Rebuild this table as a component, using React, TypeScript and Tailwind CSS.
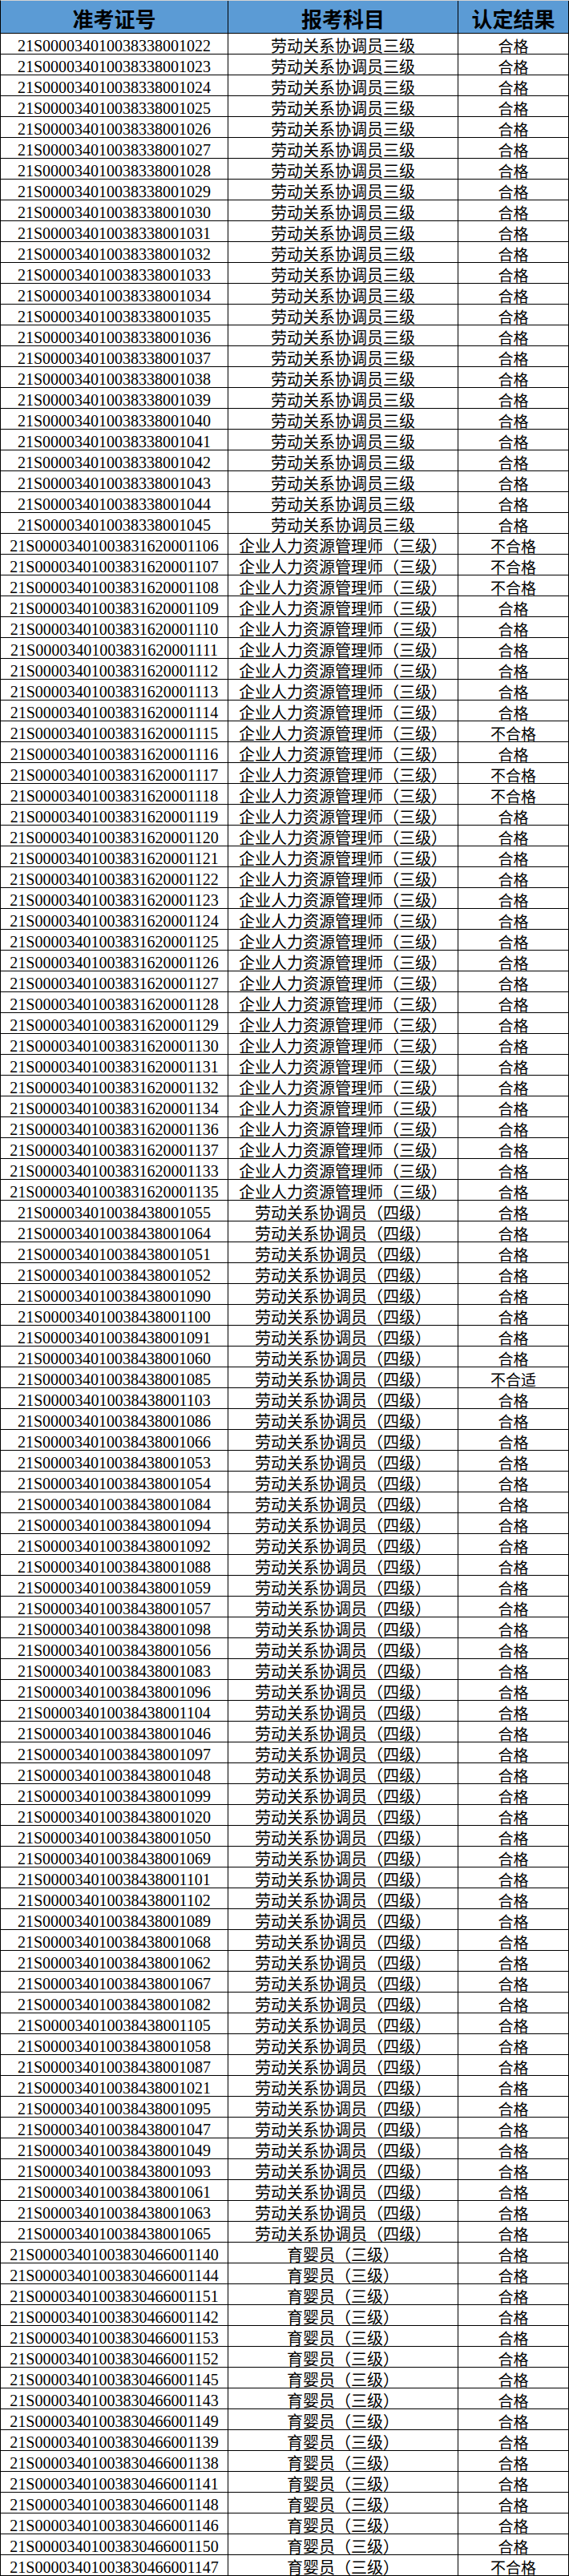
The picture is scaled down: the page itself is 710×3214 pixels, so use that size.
type Row = { id: string; subject: string; result: string };

const LAO3 = "劳动关系协调员三级";
const QIYE = "企业人力资源管理师（三级）";
const LAO4 = "劳动关系协调员（四级）";
const YUYING = "育婴员（三级）";

const build = (prefix: string, subject: string, nums: number[], fails: Record<number, string> = {}): Row[] =>
  nums.map((n) => ({ id: prefix + n, subject, result: fails[n] || "合格" }));

const range = (a: number, b: number) => Array.from({ length: b - a + 1 }, (_, i) => a + i);

const rows: Row[] = [
  ...build("21S00003401003833800", LAO3, range(1022, 1045)),
  ...build(
    "21S0000340100383162000",
    QIYE,
    [...range(1106, 1132), 1134, 1136, 1137, 1133, 1135],
    { 1106: "不合格", 1107: "不合格", 1108: "不合格", 1115: "不合格", 1117: "不合格", 1118: "不合格" }
  ),
  ...build(
    "21S00003401003843800",
    LAO4,
    [
      1055, 1064, 1051, 1052, 1090, 1100, 1091, 1060, 1085, 1103,
      1086, 1066, 1053, 1054, 1084, 1094, 1092, 1088, 1059, 1057,
      1098, 1056, 1083, 1096, 1104, 1046, 1097, 1048, 1099, 1020,
      1050, 1069, 1101, 1102, 1089, 1068, 1062, 1067, 1082, 1105,
      1058, 1087, 1021, 1095, 1047, 1049, 1093, 1061, 1063, 1065,
    ],
    { 1085: "不合适" }
  ),
  ...build(
    "21S0000340100383046600",
    YUYING,
    [1140, 1144, 1151, 1142, 1153, 1152, 1145, 1143, 1149, 1139, 1138, 1141, 1148, 1146, 1150, 1147],
    { 1147: "不合格" }
  ),
];

const cjk = "font-['Noto_Sans_CJK_SC',sans-serif]";
const serif = "font-['Liberation_Serif','Noto_Sans_CJK_SC',serif]";

export default function App() {
  return (
    <div className="w-[710px] bg-white text-black">
      {/* header */}
      <div className="grid grid-cols-[284px_287px_138px] border-t border-[#d4d4d4] border-b border-b-black border-l border-l-black bg-[#5b9bd5]">
        {["准考证号", "报考科目", "认定结果"].map((h) => (
          <div
            key={h}
            className={`h-[40px] flex items-center justify-center pt-[4px] border-r border-black text-[26px] font-bold leading-none ${cjk}`}
          >
            {h}
          </div>
        ))}
      </div>

      {rows.map((r) => (
        <div key={r.id} className="grid grid-cols-[284px_287px_138px] border-l border-b border-black">
          <div className={`h-[25px] flex items-center justify-center pt-[4px] border-r border-black text-[20px] leading-none ${serif}`}>
            {r.id}
          </div>
          <div className={`h-[25px] flex items-center justify-center pt-[4px] border-r border-black text-[20px] leading-none ${cjk}`}>
            {r.subject}
          </div>
          <div className={`h-[25px] flex items-center justify-center pt-[4px] border-r border-black text-[19px] leading-none ${cjk}`}>
            {r.result}
          </div>
        </div>
      ))}
    </div>
  );
}
